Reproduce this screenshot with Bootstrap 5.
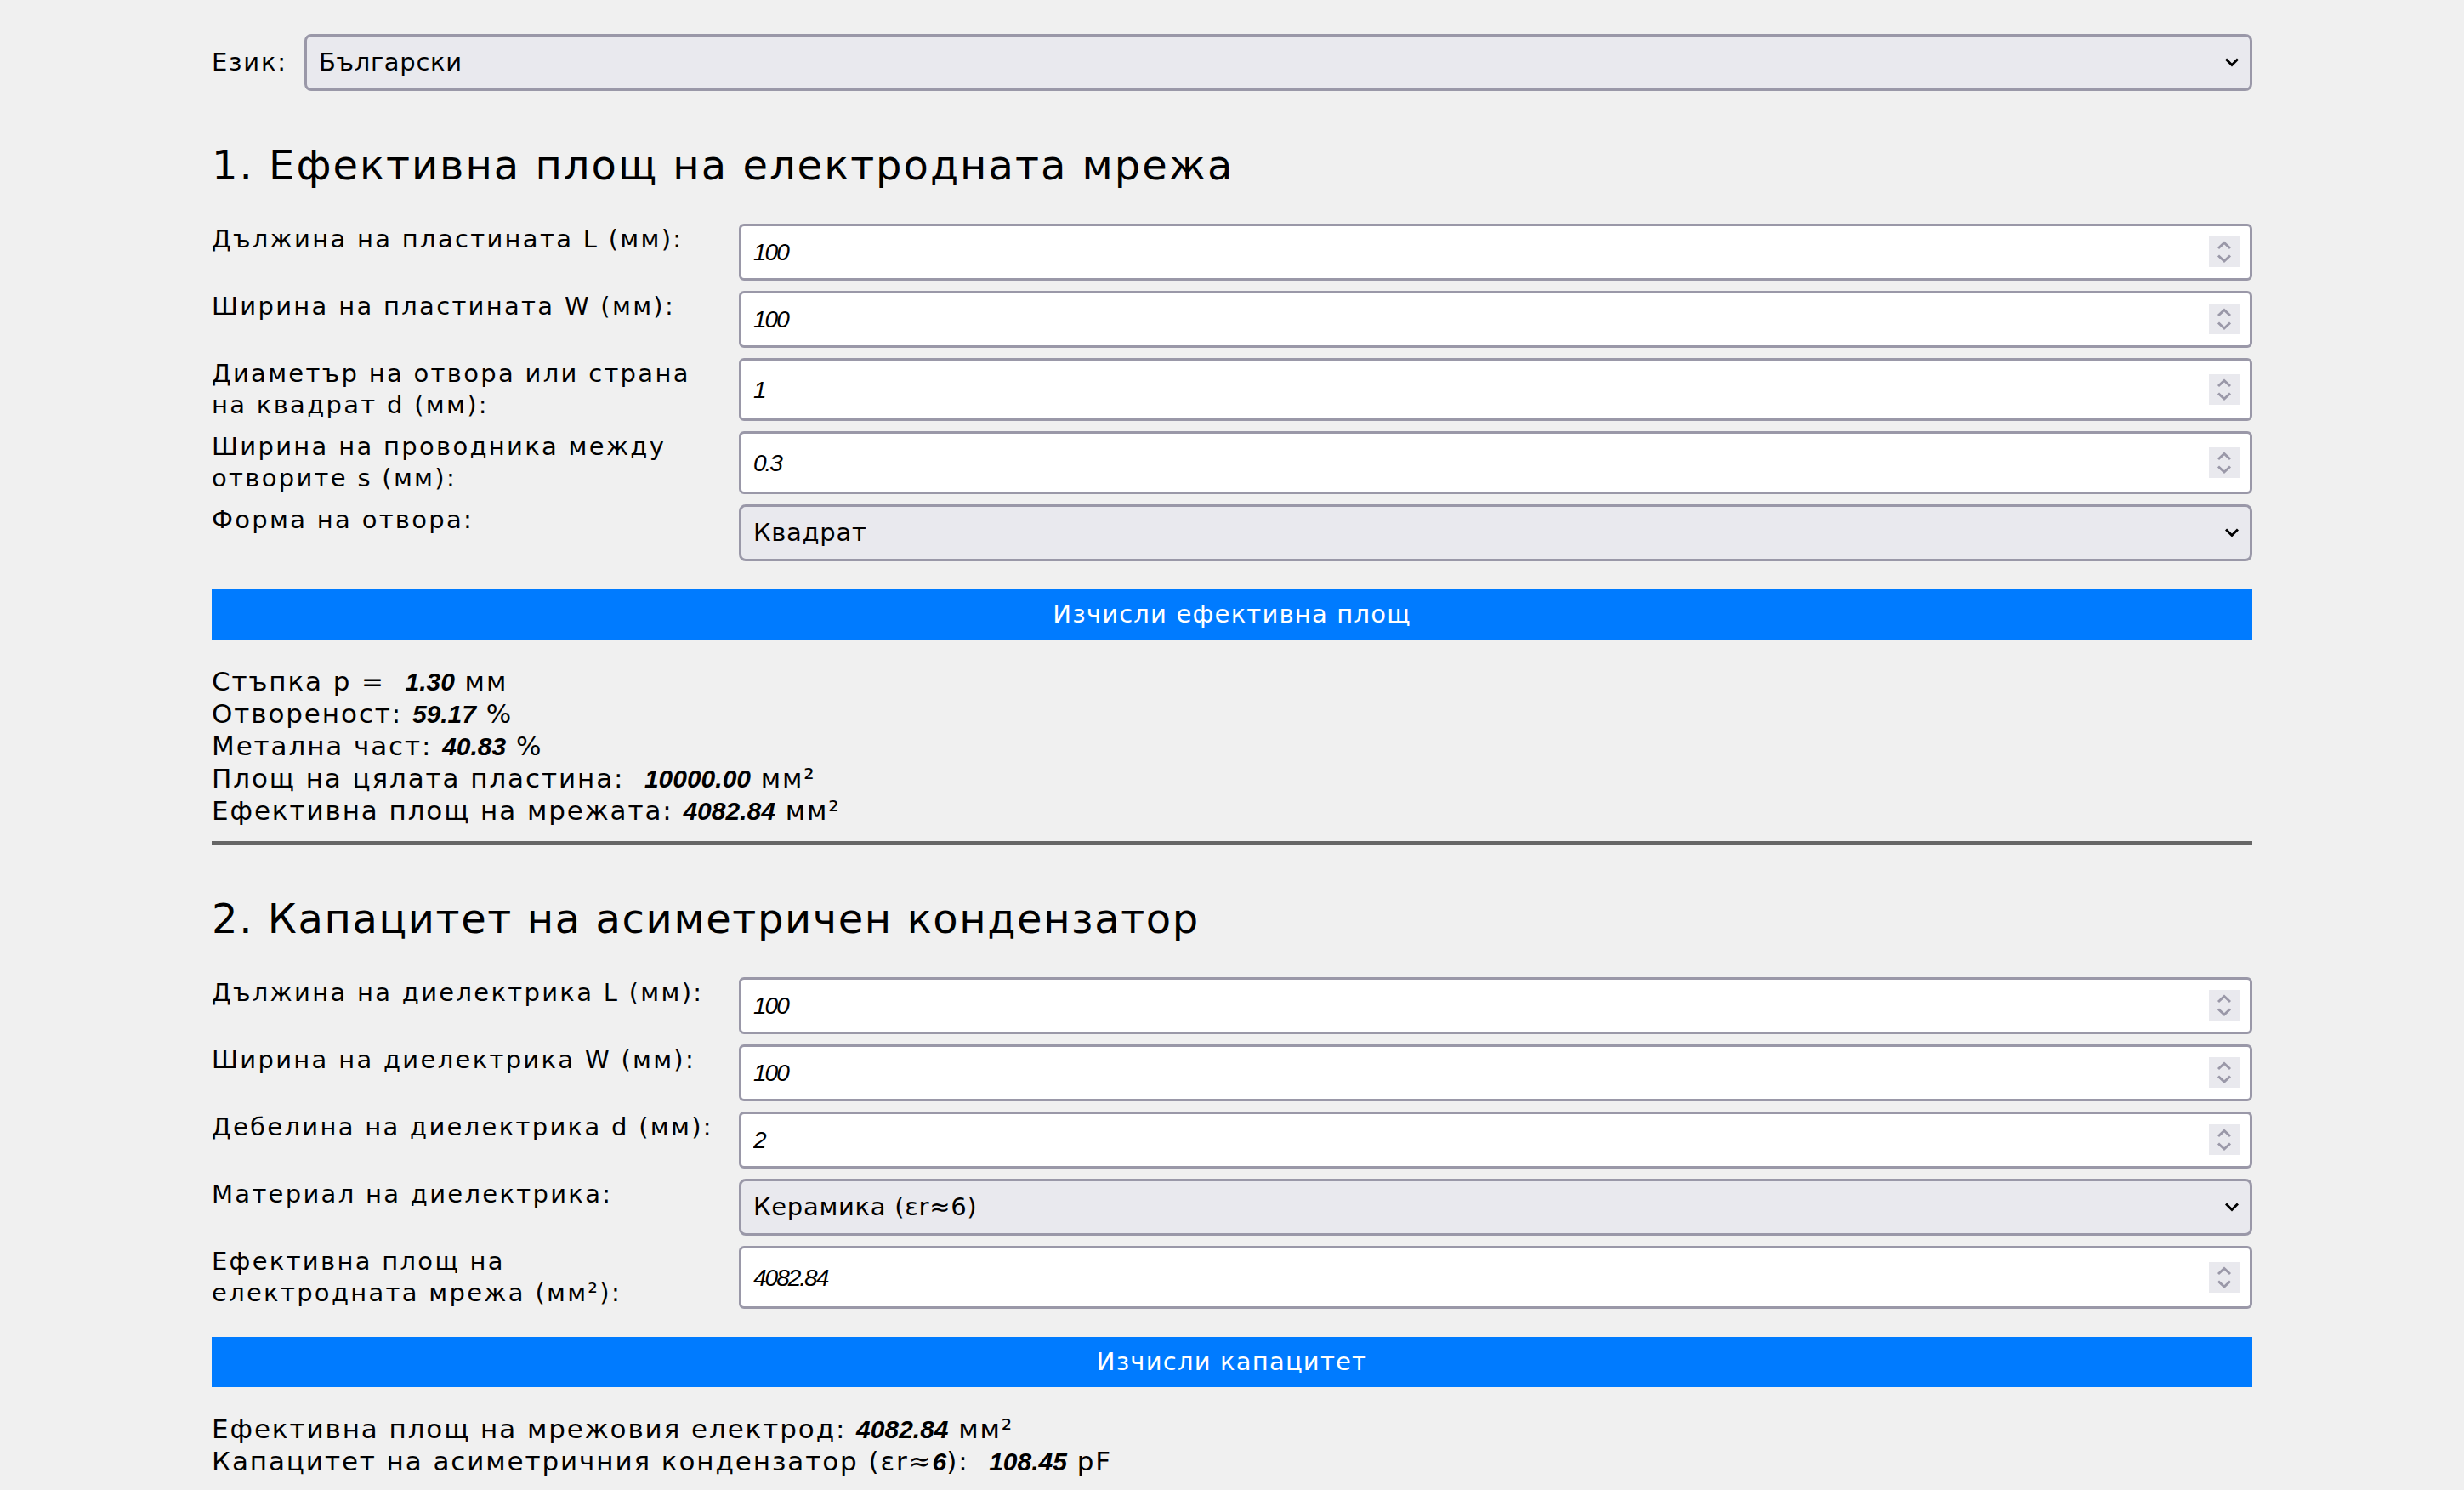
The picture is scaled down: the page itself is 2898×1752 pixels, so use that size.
<!doctype html>
<html lang="bg"><head><meta charset="utf-8"><title>Калкулатор</title>
<link href="https://cdn.jsdelivr.net/npm/bootstrap@5.3.0/dist/css/bootstrap.min.css" rel="stylesheet">
<style>
body{background:#f0f0f0;color:#000;font-family:"DejaVu Sans",sans-serif;font-size:29px;line-height:37px}
.page-wrap{width:2400px;padding-top:40px}
.lang-row{gap:20px;margin-bottom:58px}
.lang-row label{letter-spacing:1.8px}
.field{height:67px;border:3px solid #9a98a8;border-radius:6px;font:inherit;color:#000;width:100%;box-shadow:none}
select.field{background-color:#e9e9ee;appearance:none;padding:0 40px 0 14px;letter-spacing:.7px;border-radius:8px;
background-image:url("data:image/svg+xml,%3Csvg xmlns='http://www.w3.org/2000/svg' viewBox='0 0 16 11'%3E%3Cpath d='M1 1.5 8 8.5 15 1.5' fill='none' stroke='%23000' stroke-width='3'/%3E%3C/svg%3E");
background-repeat:no-repeat;background-position:right 13px center;background-size:16px 11px}
input.field{background:#fff;font-family:"Liberation Sans",sans-serif;font-style:italic;font-size:28px;letter-spacing:-2px;padding:0 12px 0 14px}
input.field::-webkit-inner-spin-button{appearance:none;opacity:1;width:36px;height:36px;
background:#e9e9ee url("data:image/svg+xml,%3Csvg xmlns='http://www.w3.org/2000/svg' viewBox='0 0 36 36'%3E%3Cpath d='M11 14 18 7.5 25 14M11 22.5 18 29 25 22.5' fill='none' stroke='%239a98a8' stroke-width='3'/%3E%3C/svg%3E") center/36px 36px no-repeat}
.sec-title{font-size:48px;line-height:58px;font-weight:400;letter-spacing:2px;margin-bottom:40px}
.sec-title-tight{letter-spacing:1.6px}
.lbl{flex:0 0 600px;margin:0;letter-spacing:2.3px;line-height:37px}
.frow{gap:20px;margin-bottom:12px;align-items:stretch}
.frow .field{height:auto;min-height:67px}
.calc-btn{background:#007bff;color:#fff;height:59px;width:100%;border:0;border-radius:0;font:inherit;letter-spacing:1.2px;margin:21px 0 30px}
.calc-btn:hover{background:#007bff;color:#fff}
.res-block{font-size:31px;line-height:38px;letter-spacing:1.9px}
.seg{font-family:"Liberation Sans",sans-serif;font-style:italic;font-weight:700;font-size:30px;letter-spacing:0;line-height:0}
.rule{border:0;border-top:4px solid #666;opacity:1;margin:17px 0 58px}
</style></head><body>
<div class="page-wrap mx-auto">
<div class="d-flex align-items-center lang-row"><label for="lang" class="text-nowrap">Език:</label>
<select id="lang" class="form-select field"><option>Български</option></select></div>

<h2 class="sec-title">1. Ефективна площ на електродната мрежа</h2>
<div class="d-flex frow"><label class="lbl">Дължина на пластината L (мм):</label><input class="form-control field" type="number" value="100"></div>
<div class="d-flex frow"><label class="lbl">Ширина на пластината W (мм):</label><input class="form-control field" type="number" value="100"></div>
<div class="d-flex frow"><label class="lbl">Диаметър на отвора или страна на квадрат d (мм):</label><input class="form-control field" type="number" value="1"></div>
<div class="d-flex frow"><label class="lbl">Ширина на проводника между отворите s (мм):</label><input class="form-control field" type="number" value="0.3"></div>
<div class="d-flex frow"><label class="lbl">Форма на отвора:</label><select class="form-select field"><option>Квадрат</option></select></div>
<button class="btn calc-btn" type="button">Изчисли ефективна площ</button>
<div class="res-block">Стъпка p = &nbsp;<span class="seg">1.30</span> мм<br>Отвореност: <span class="seg">59.17</span> %<br>Метална част: <span class="seg">40.83</span> %<br>Площ на цялата пластина: &nbsp;<span class="seg">10000.00</span> мм²<br>Ефективна площ на мрежата: <span class="seg">4082.84</span> мм²</div>
<hr class="rule">

<h2 class="sec-title sec-title-tight">2. Капацитет на асиметричен кондензатор</h2>
<div class="d-flex frow"><label class="lbl">Дължина на диелектрика L (мм):</label><input class="form-control field" type="number" value="100"></div>
<div class="d-flex frow"><label class="lbl">Ширина на диелектрика W (мм):</label><input class="form-control field" type="number" value="100"></div>
<div class="d-flex frow"><label class="lbl">Дебелина на диелектрика d (мм):</label><input class="form-control field" type="number" value="2"></div>
<div class="d-flex frow"><label class="lbl">Материал на диелектрика:</label><select class="form-select field"><option>Керамика (εr≈6)</option></select></div>
<div class="d-flex frow"><label class="lbl">Ефективна площ на<br>електродната мрежа (мм²):</label><input class="form-control field" type="number" value="4082.84"></div>
<button class="btn calc-btn" type="button">Изчисли капацитет</button>
<div class="res-block">Ефективна площ на мрежовия електрод: <span class="seg">4082.84</span> мм²<br>Капацитет на асиметричния кондензатор (εr≈<span class="seg">6</span>): &nbsp;<span class="seg">108.45</span> pF</div>
</div>
<script src="https://cdn.jsdelivr.net/npm/bootstrap@5.3.0/dist/js/bootstrap.bundle.min.js"></script>
</body></html>
